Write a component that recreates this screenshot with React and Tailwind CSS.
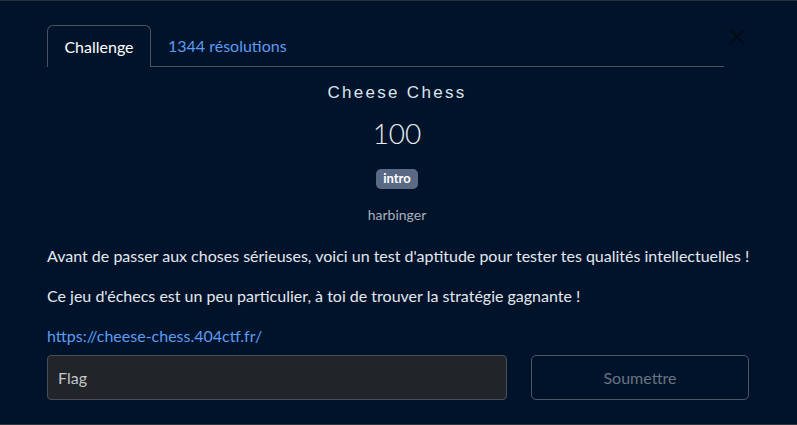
import React from "react";

export default function App() {
  return (
    <div
      className="w-[797px] h-[425px] bg-[#01132b] relative overflow-hidden flex flex-col"
      style={{ fontFamily: "Lato, 'Liberation Sans', sans-serif" }}
    >
      <div className="h-[1px] bg-[#27313f]" />
      <div className="absolute left-[729px] top-[29px]">
        <svg width="16" height="16" viewBox="0 0 16 16" fill="none" stroke="#020b17" strokeWidth="2">
          <path d="M1 1 L15 15 M15 1 L1 15" />
        </svg>
      </div>

      <div className="pl-[47px] pr-[40px] pt-[24px] flex-1">
        <div className="flex w-[677px] border-b border-[#4a5260] h-[42px]">
          <div className="w-[104px] border border-b-0 border-[#4a5260] rounded-t-[6px] bg-[#01132b] flex items-center justify-center text-[16px] text-white -mb-[1px]">
            Challenge
          </div>
          <div className="ml-[17px] flex items-center text-[16px] text-[#5c9cf2]">1344 résolutions</div>
        </div>

        <div className="flex flex-col items-center w-[700px]">
          <div
            className="mt-[15px] text-[17px] leading-[22px] text-[#dde3ea] tracking-[2.3px]"
            style={{ fontFamily: "'Liberation Sans', Arial, sans-serif" }}
          >
            Cheese Chess
          </div>
          <div className="mt-[13px] text-[28px] leading-[32px] text-[#e8ecf0] font-light">100</div>
          <div className="mt-[20px] px-[7px] h-[20px] rounded-[5px] bg-[#5b6a84] text-white font-bold text-[13px] flex items-center">
            intro
          </div>
          <div className="mt-[16px] text-[14px] leading-[20px] text-[#a8b0ba]">harbinger</div>
        </div>

        <p className="mt-[19px] text-[16px] leading-[24px] text-[#e4e8ee] whitespace-nowrap">
          Avant de passer aux choses sérieuses, voici un test d'aptitude pour tester tes qualités intellectuelles !
        </p>
        <p className="mt-[16px] text-[16px] leading-[24px] text-[#e4e8ee]">
          Ce jeu d'échecs est un peu particulier, à toi de trouver la stratégie gagnante !
        </p>
        <p className="mt-[16px] text-[16px] leading-[24px] text-[#5c9cf2]">https://cheese-chess.404ctf.fr/</p>

        <div className="mt-[7px] flex gap-[24px]">
          <div className="w-[460px] h-[45px] bg-[#212428] border border-[#4a4f56] rounded-[4px] flex items-center pl-[10px] text-[16px] text-[#c4c7cb]">
            Flag
          </div>
          <div className="w-[218px] h-[45px] border border-[#4d5664] rounded-[5px] flex items-center justify-center text-[16px] text-[#6a7480]">
            Soumettre
          </div>
        </div>
      </div>
      <div className="h-[1px] bg-[#30363f]" />
    </div>
  );
}
